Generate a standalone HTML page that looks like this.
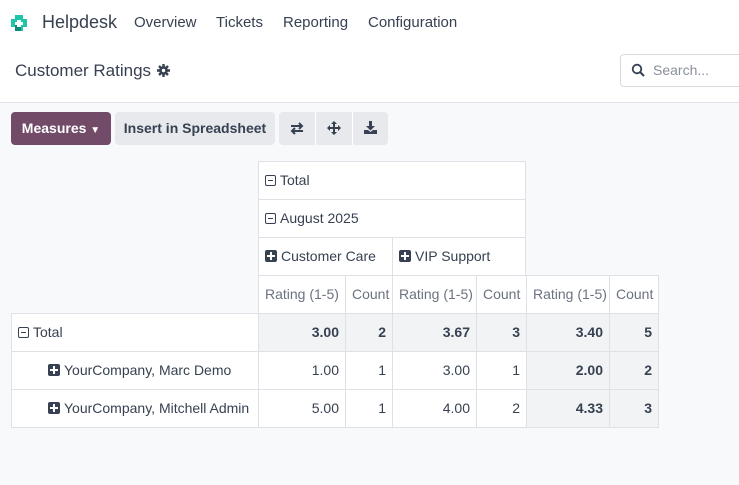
<!DOCTYPE html>
<html><head><style>
*{box-sizing:border-box;margin:0;padding:0}
body{width:739px;height:485px;overflow:hidden;background:#f8f9fa;font-family:"Liberation Sans",sans-serif;font-size:14px;color:#374151;position:relative}
.top{position:absolute;left:0;top:0;width:739px;height:103px;background:#fff;border-bottom:1px solid #dee2e6}
.a{position:absolute;white-space:nowrap}
.btn{position:absolute;top:112px;height:33px;border-radius:4px;background:#e7e9ed;font-weight:bold;color:#374151;line-height:33px;text-align:center;font-size:14px}
.c{position:absolute;border:1px solid #dee2e6;background:#fff;line-height:36px;padding:0 6px;white-space:nowrap;font-size:14px}
.r{text-align:right}
.g{background:#f1f3f5}
.b{font-weight:bold}
.pl{display:inline-block;width:12px;height:12px;background:#374151;border-radius:2px;position:relative;vertical-align:-1px;margin-right:4px}
.pl:before{content:"";position:absolute;left:2px;top:5px;width:8px;height:2px;background:#fff}
.pl:after{content:"";position:absolute;left:5px;top:2px;width:2px;height:8px;background:#fff}
.mn{display:inline-block;width:11px;height:11px;border:1px solid #374151;border-radius:2px;position:relative;vertical-align:-1px;margin-right:4px}
.mn:before{content:"";position:absolute;left:2px;top:4px;width:5px;height:1px;background:#374151}
</style></head><body>
<div class="top">
<svg class="a" style="left:10px;top:14px" width="18" height="18" viewBox="0 0 18 18"><path d="M5 1h8v4h4v8h-4v4H5v-4H1V5h4z" fill="#1fc5a8"/><path d="M7 6h4v7H7z M5 8h8v3H5z" fill="#fff"/><path d="M1 11h4v6h6v-4H7v-2z" fill="#0e8a7c"/></svg>
<div class="a" style="left:42px;top:12px;font-size:18px;color:#374151">Helpdesk</div>
<div class="a" style="left:134px;top:14px;font-size:15px">Overview</div>
<div class="a" style="left:216px;top:14px;font-size:15px">Tickets</div>
<div class="a" style="left:283px;top:14px;font-size:15px">Reporting</div>
<div class="a" style="left:368px;top:14px;font-size:15px">Configuration</div>
<div class="a" style="left:15px;top:61px;font-size:17px">Customer Ratings</div>
<svg class="a" style="left:157px;top:64px" width="13" height="13" viewBox="0 0 13 13"><circle cx="6.5" cy="6.5" r="4.3" fill="#374151"/><g stroke="#374151" stroke-width="2.4"><path d="M6.5 0v13M0 6.5h13M2 2l9 9M11 2l-9 9"/></g><circle cx="6.5" cy="6.5" r="1.7" fill="#fff"/></svg>
<div class="a" style="left:620px;top:54px;width:130px;height:33px;border:1px solid #d8dadd;border-radius:4px;background:#fff"></div>
<svg class="a" style="left:631px;top:63px" width="14" height="14" viewBox="0 0 14 14"><circle cx="6" cy="6" r="4.3" fill="none" stroke="#374151" stroke-width="1.8"/><path d="M9 9l4 4" stroke="#374151" stroke-width="2"/></svg>
<div class="a" style="left:653px;top:62px;color:#8a9099;font-size:14px">Search...</div>
</div>
<div class="btn" style="left:11px;width:100px;background:#714b67;color:#fff">Measures <span style="font-size:10px">▼</span></div>
<div class="btn" style="left:115px;width:160px">Insert in Spreadsheet</div>
<div class="btn" style="left:279px;width:109px"></div>
<div class="a" style="left:315px;top:112px;width:1px;height:33px;background:#fff"></div>
<div class="a" style="left:352px;top:112px;width:1px;height:33px;background:#fff"></div>
<svg class="a" style="left:290px;top:122px" width="14" height="13" viewBox="0 0 14 13"><path d="M1 4h11M9 1l3 3-3 3M13 9H2M5 6L2 9l3 3" fill="none" stroke="#374151" stroke-width="2"/></svg>
<svg class="a" style="left:327px;top:121px" width="14" height="14" viewBox="0 0 14 14"><path d="M7 1v12M1 7h12" stroke="#374151" stroke-width="2"/><path d="M7 0l3 3H4zM7 14l3-3H4zM0 7l3-3v6zM14 7l-3-3v6z" fill="#374151"/></svg>
<svg class="a" style="left:364px;top:121px" width="13" height="13" viewBox="0 0 13 13"><path d="M5 0h3v5h3l-4.5 4.5L2 5h3z" fill="#374151"/><path d="M0 9h4l2.5 2 2.5-2h4v4H0z" fill="#374151"/></svg>

<div class="c" style="left:258px;top:161px;width:268px;height:39px"><span class="mn"></span>Total</div>
<div class="c" style="left:258px;top:199px;width:268px;height:39px"><span class="mn"></span>August 2025</div>
<div class="c" style="left:258px;top:237px;width:135px;height:39px"><span class="pl"></span>Customer Care</div>
<div class="c" style="left:392px;top:237px;width:134px;height:39px"><span class="pl"></span>VIP Support</div>
<div class="c" style="left:258px;top:275px;width:88px;height:39px;color:#6b7280">Rating (1-5)</div>
<div class="c" style="left:345px;top:275px;width:48px;height:39px;color:#6b7280">Count</div>
<div class="c" style="left:392px;top:275px;width:85px;height:39px;color:#6b7280">Rating (1-5)</div>
<div class="c" style="left:476px;top:275px;width:51px;height:39px;color:#6b7280">Count</div>
<div class="c" style="left:526px;top:275px;width:84px;height:39px;color:#6b7280">Rating (1-5)</div>
<div class="c" style="left:609px;top:275px;width:50px;height:39px;color:#6b7280">Count</div>

<div class="c" style="left:11px;top:313px;width:248px;height:39px"><span class="mn"></span>Total</div>
<div class="c r g b" style="left:258px;top:313px;width:88px;height:39px">3.00</div>
<div class="c r g b" style="left:345px;top:313px;width:48px;height:39px">2</div>
<div class="c r g b" style="left:392px;top:313px;width:85px;height:39px">3.67</div>
<div class="c r g b" style="left:476px;top:313px;width:51px;height:39px">3</div>
<div class="c r g b" style="left:526px;top:313px;width:84px;height:39px">3.40</div>
<div class="c r g b" style="left:609px;top:313px;width:50px;height:39px">5</div>

<div class="c" style="left:11px;top:351px;width:248px;height:39px;padding-left:36px"><span class="pl"></span>YourCompany, Marc Demo</div>
<div class="c r" style="left:258px;top:351px;width:88px;height:39px">1.00</div>
<div class="c r" style="left:345px;top:351px;width:48px;height:39px">1</div>
<div class="c r" style="left:392px;top:351px;width:85px;height:39px">3.00</div>
<div class="c r" style="left:476px;top:351px;width:51px;height:39px">1</div>
<div class="c r g b" style="left:526px;top:351px;width:84px;height:39px">2.00</div>
<div class="c r g b" style="left:609px;top:351px;width:50px;height:39px">2</div>

<div class="c" style="left:11px;top:389px;width:248px;height:39px;padding-left:36px"><span class="pl"></span>YourCompany, Mitchell Admin</div>
<div class="c r" style="left:258px;top:389px;width:88px;height:39px">5.00</div>
<div class="c r" style="left:345px;top:389px;width:48px;height:39px">1</div>
<div class="c r" style="left:392px;top:389px;width:85px;height:39px">4.00</div>
<div class="c r" style="left:476px;top:389px;width:51px;height:39px">2</div>
<div class="c r g b" style="left:526px;top:389px;width:84px;height:39px">4.33</div>
<div class="c r g b" style="left:609px;top:389px;width:50px;height:39px">3</div>
</body></html>
